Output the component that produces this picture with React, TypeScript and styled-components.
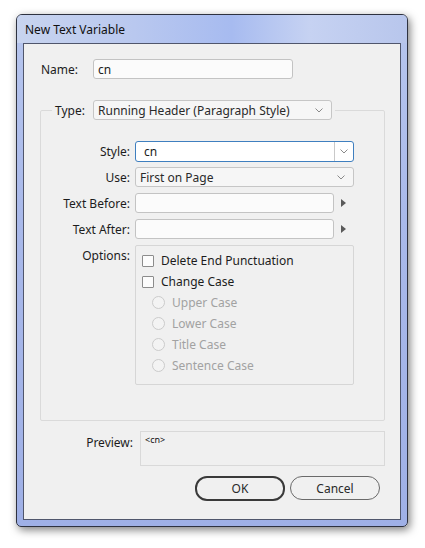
import styled, { createGlobalStyle } from "styled-components";

const GlobalStyle = createGlobalStyle`
  html, body {
    margin: 0;
    padding: 0;
    background: #ffffff;
  }
  body {
    font-family: "Noto Sans", "Open Sans", sans-serif;
    font-size: 12px;
    color: #1c1c1c;
  }
`;

const Chevron = () => (
  <svg width="8" height="5" viewBox="0 0 8 5">
    <polyline points="0.5,0.5 4,4 7.5,0.5" fill="none" stroke="#8a8a8a" strokeWidth="1" />
  </svg>
);

export default function App() {
  const caseOptions = ["Upper Case", "Lower Case", "Title Case", "Sentence Case"];

  return (
    <>
      <GlobalStyle />
      <Page>
        <Window>
          <TitleBar>New Text Variable</TitleBar>
          <Client>
            <NameRow>
              <NameLabel>Name:</NameLabel>
              <TextBox $width={200}>cn</TextBox>
            </NameRow>

            <Group>
              <Legend>
                <LegendLabel>Type:</LegendLabel>
                <Select $width={239}>
                  <span>Running Header (Paragraph Style)</span>
                  <Chevron />
                </Select>
              </Legend>

              <Form>
                <FieldLabel>Style:</FieldLabel>
                <Combo $focused>
                  <ComboText>cn</ComboText>
                  <ComboButton>
                    <Chevron />
                  </ComboButton>
                </Combo>

                <FieldLabel>Use:</FieldLabel>
                <Select $width={219}>
                  <span>First on Page</span>
                  <Chevron />
                </Select>

                <FieldLabel>Text Before:</FieldLabel>
                <InputWithMenu>
                  <TextBox $width={199} />
                  <MenuArrow />
                </InputWithMenu>

                <FieldLabel>Text After:</FieldLabel>
                <InputWithMenu>
                  <TextBox $width={199} />
                  <MenuArrow />
                </InputWithMenu>

                <FieldLabel $top>Options:</FieldLabel>
                <OptionsBox>
                  <CheckRow>
                    <CheckBox />
                    <span>Delete End Punctuation</span>
                  </CheckRow>
                  <CheckRow>
                    <CheckBox />
                    <span>Change Case</span>
                  </CheckRow>
                  {caseOptions.map((label) => (
                    <RadioRow key={label}>
                      <Radio />
                      <span>{label}</span>
                    </RadioRow>
                  ))}
                </OptionsBox>
              </Form>
            </Group>

            <PreviewRow>
              <PreviewLabel>Preview:</PreviewLabel>
              <PreviewBox>&lt;cn&gt;</PreviewBox>
            </PreviewRow>

            <ButtonRow>
              <Button $default>OK</Button>
              <Button>Cancel</Button>
            </ButtonRow>
          </Client>
        </Window>
      </Page>
    </>
  );
}

const Page = styled.div`
  width: 425px;
  height: 548px;
  padding: 14px 0 0 16px;
  box-sizing: border-box;
`;

const Window = styled.div`
  width: 392px;
  height: 513px;
  box-sizing: border-box;
  border: 1px solid #2e3240;
  border-radius: 6px 6px 5px 5px;
  background: linear-gradient(180deg, #b7c6ee 0%, #a9b9ea 40%, #9fb0e6 100%);
  box-shadow: 2px 3px 9px rgba(0, 0, 0, 0.5);
  padding: 0 6px 6px 6px;
  display: flex;
  flex-direction: column;
`;

const TitleBar = styled.div`
  height: 28px;
  display: flex;
  align-items: center;
  margin: 0 -6px;
  padding-left: 8px;
  border-radius: 5px 5px 0 0;
  background: linear-gradient(
    90deg,
    #c8d4ef 0%,
    #b9c8ef 30%,
    #a7bbf0 55%,
    #c6d2f2 75%,
    #b8c6ec 100%
  );
  font-size: 12px;
  color: #101010;
`;

const Client = styled.div`
  flex: 1;
  background: #f0f0f0;
  border: 1px solid #50566c;
  display: flex;
  flex-direction: column;
`;

const NameRow = styled.div`
  display: flex;
  align-items: center;
  margin: 15px 0 0 17px;
`;

const NameLabel = styled.div`
  width: 52px;
`;

const TextBox = styled.div<{ $width: number }>`
  width: ${(p) => p.$width}px;
  height: 20px;
  box-sizing: border-box;
  border: 1px solid #c3c3c3;
  border-radius: 3px;
  background: #fbfbfb;
  padding: 0 4px;
  display: flex;
  align-items: center;
  color: #222;
`;

const Group = styled.fieldset`
  margin: 21px 0 0 16px;
  padding: 0 0 35px 0;
  width: 345px;
  box-sizing: border-box;
  border: 1px solid #dadada;
  border-radius: 2px;
  min-inline-size: 0;
`;

const Legend = styled.legend`
  margin-left: 11px;
  padding: 0 3px;
  display: flex;
  align-items: center;
`;

const LegendLabel = styled.div`
  width: 38px;
`;

const Select = styled.div<{ $width: number }>`
  width: ${(p) => p.$width}px;
  height: 20px;
  box-sizing: border-box;
  border: 1px solid #c6c6c6;
  border-radius: 3px;
  background: #f6f6f6;
  padding: 0 8px 0 4px;
  display: flex;
  align-items: center;
  justify-content: space-between;
  color: #2a2a2a;
`;

const Form = styled.div`
  margin-top: 21px;
  display: grid;
  grid-template-columns: 89px 1fr;
  grid-template-rows: repeat(4, 21px) auto;
  column-gap: 5px;
  row-gap: 5px;
  align-items: start;
`;

const FieldLabel = styled.div<{ $top?: boolean }>`
  text-align: right;
  white-space: nowrap;
  align-self: ${(p) => (p.$top ? "start" : "center")};
  padding-top: ${(p) => (p.$top ? "2px" : "0")};
`;

const Combo = styled.div<{ $focused?: boolean }>`
  width: 219px;
  height: 21px;
  box-sizing: border-box;
  border: 1px solid ${(p) => (p.$focused ? "#3f7fbf" : "#c6c6c6")};
  border-radius: 3px;
  background: #ffffff;
  display: flex;
  align-items: stretch;
`;

const ComboText = styled.div`
  flex: 1;
  padding-left: 8px;
  display: flex;
  align-items: center;
`;

const ComboButton = styled.div`
  width: 18px;
  border-left: 1px solid #c9c9c9;
  display: flex;
  align-items: center;
  justify-content: center;
`;

const InputWithMenu = styled.div`
  display: flex;
  align-items: center;
  height: 20px;
`;

const MenuArrow = styled.div`
  margin-left: 7px;
  width: 0;
  height: 0;
  border-top: 4px solid transparent;
  border-bottom: 4px solid transparent;
  border-left: 5px solid #5a5a5a;
`;

const OptionsBox = styled.div`
  width: 219px;
  height: 140px;
  box-sizing: border-box;
  border: 1px solid #d6d6d6;
  border-radius: 2px;
  padding: 4px 0 0 6px;
  display: flex;
  flex-direction: column;
`;

const CheckRow = styled.div`
  height: 21px;
  display: flex;
  align-items: center;
  gap: 7px;
`;

const CheckBox = styled.div`
  width: 12px;
  height: 12px;
  box-sizing: border-box;
  border: 1px solid #8c8c8c;
  border-radius: 1px;
  background: #fcfcfc;
`;

const RadioRow = styled.div`
  height: 21px;
  display: flex;
  align-items: center;
  gap: 7px;
  padding-left: 10px;
  color: #a2a2a2;
`;

const Radio = styled.div`
  width: 13px;
  height: 13px;
  box-sizing: border-box;
  border: 1px solid #cbcbcb;
  border-radius: 50%;
  background: #f3f3f3;
`;

const PreviewRow = styled.div`
  display: flex;
  align-items: flex-start;
  margin-top: 10px;
`;

const PreviewLabel = styled.div`
  width: 109px;
  text-align: right;
  padding-top: 3px;
`;

const PreviewBox = styled.div`
  margin-left: 7px;
  width: 245px;
  height: 35px;
  box-sizing: border-box;
  border: 1px solid #d9d9d9;
  padding: 1px 4px;
  font-size: 9px;
  color: #111;
`;

const ButtonRow = styled.div`
  display: flex;
  justify-content: flex-end;
  gap: 5px;
  margin-top: 10px;
  padding-right: 20px;
`;

const Button = styled.div<{ $default?: boolean }>`
  width: 90px;
  height: ${(p) => (p.$default ? "25px" : "24px")};
  box-sizing: border-box;
  border: ${(p) => (p.$default ? "2px solid #3a3a3a" : "1px solid #6a6a6a")};
  border-radius: 12px;
  display: flex;
  align-items: center;
  justify-content: center;
  font-size: 12px;
  color: #2a2a2a;
  background: #f0f0f0;
`;
